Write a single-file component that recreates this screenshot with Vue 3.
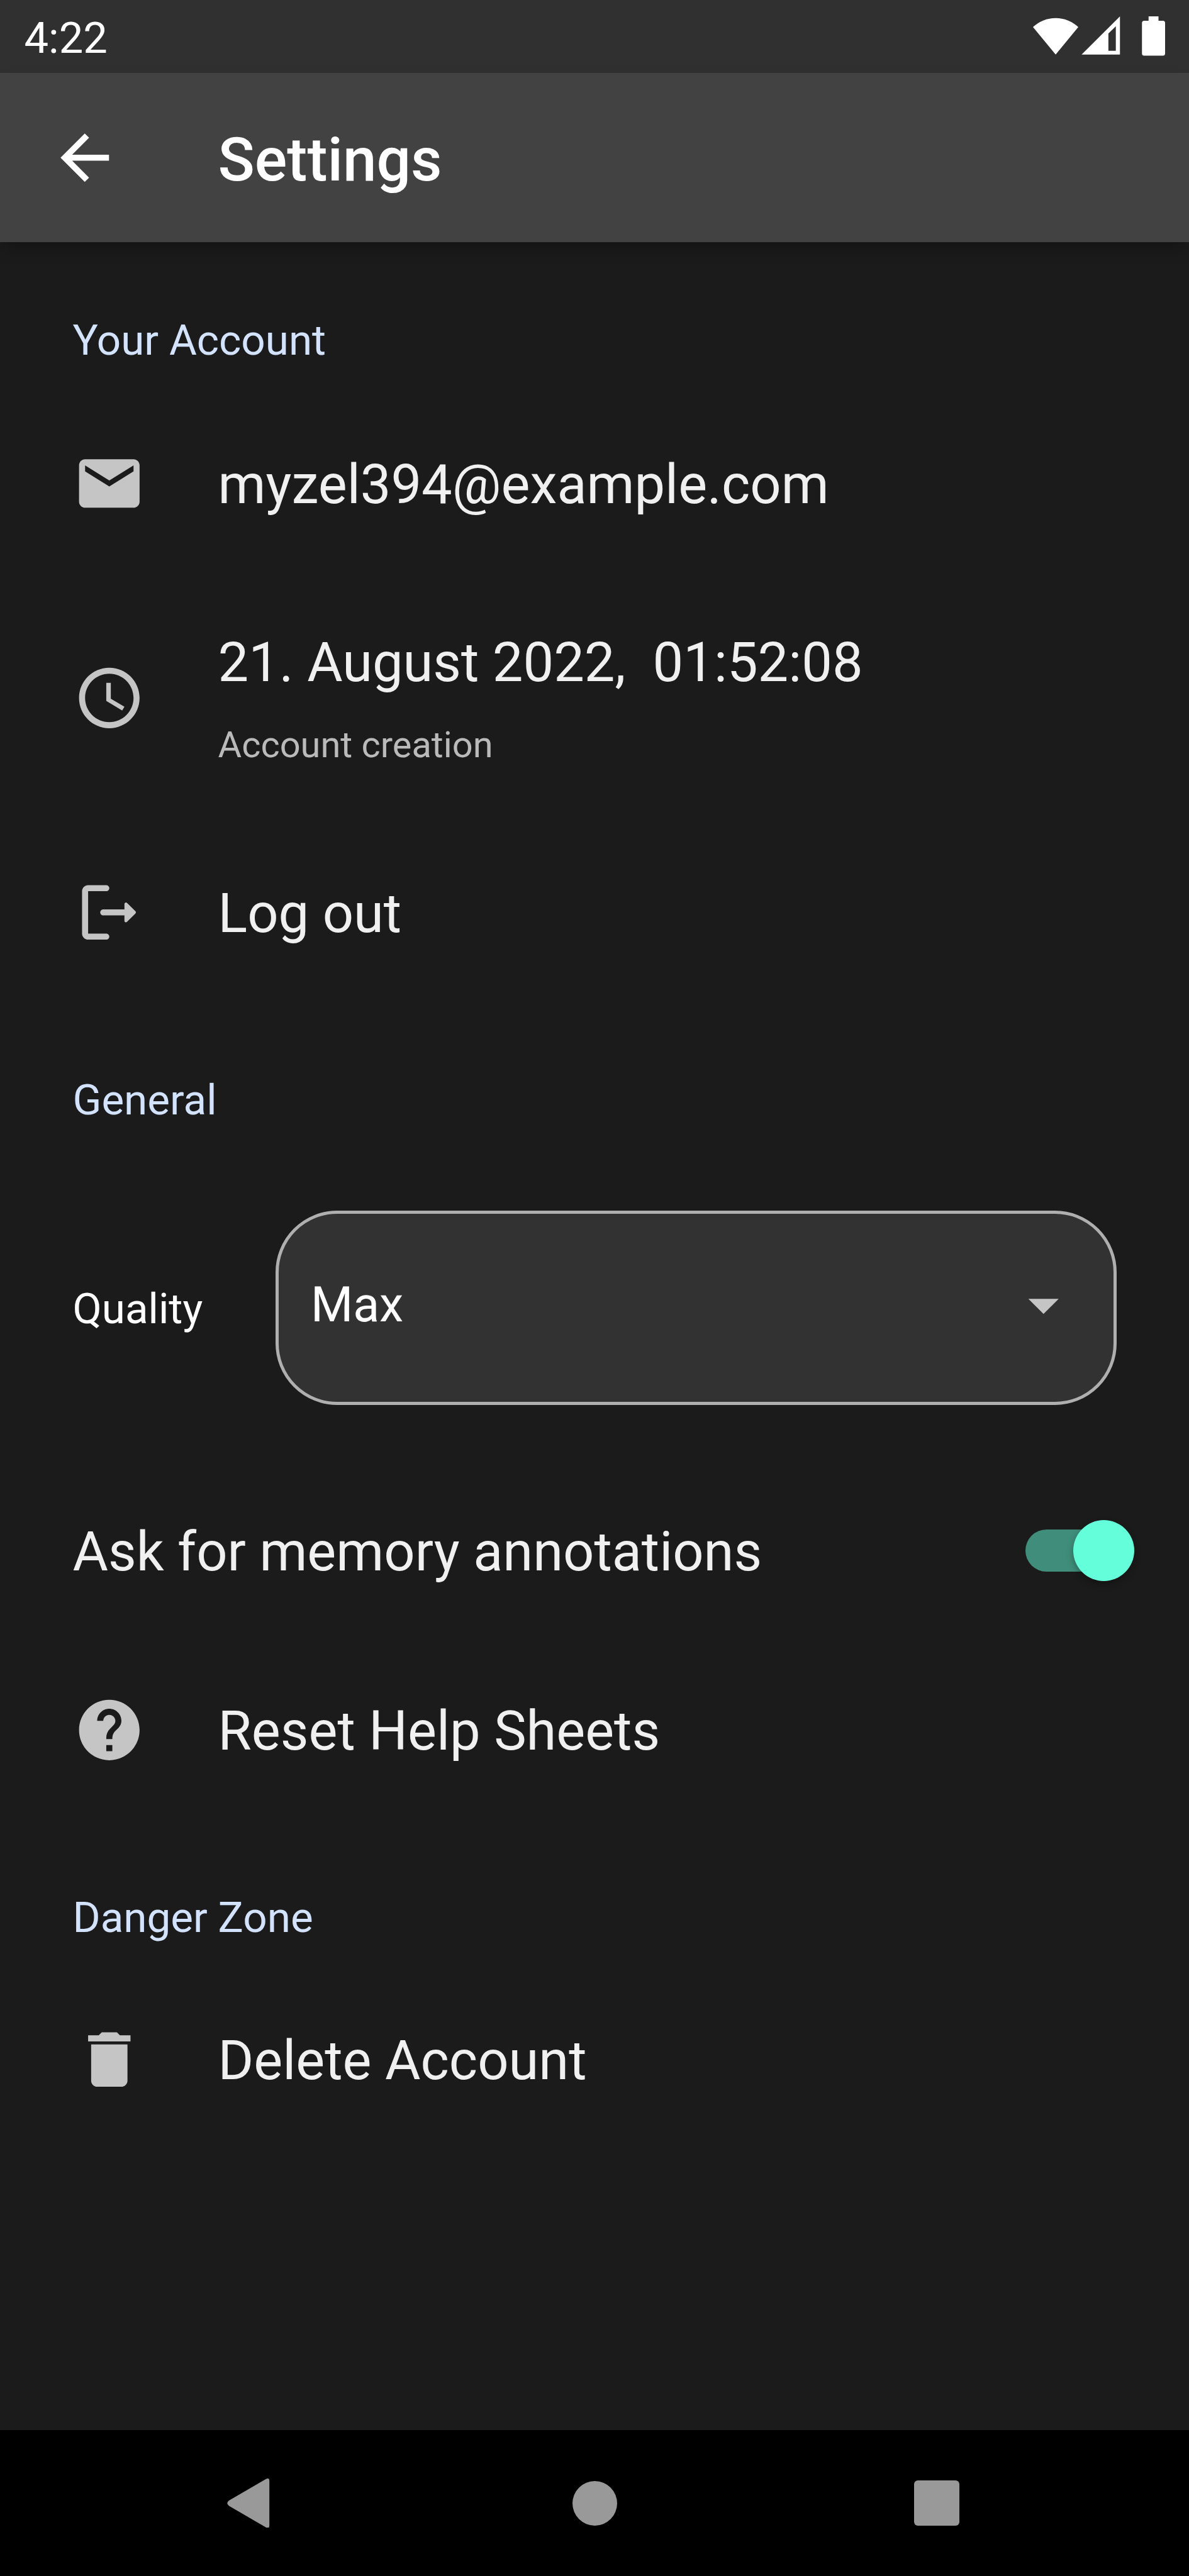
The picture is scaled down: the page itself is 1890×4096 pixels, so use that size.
<script setup>
import { ref } from 'vue'

const icons = {
  mail: 'M20 4H4c-1.1 0-1.99.9-1.99 2L2 18c0 1.1.9 2 2 2h16c1.1 0 2-.9 2-2V6c0-1.1-.9-2-2-2zm0 4l-8 5-8-5V6l8 5 8-5v2z',
  clock: 'M11.99 2C6.47 2 2 6.48 2 12s4.47 10 9.99 10C17.52 22 22 17.52 22 12S17.52 2 11.99 2zM12 20c-4.42 0-8-3.58-8-8s3.58-8 8-8 8 3.58 8 8-3.58 8-8 8zm.5-13H11v6l5.25 3.15.75-1.23-4.5-2.67V7z',
  logout: 'M5 5h6c.55 0 1-.45 1-1s-.45-1-1-1H5c-1.1 0-2 .9-2 2v14c0 1.1.9 2 2 2h6c.55 0 1-.45 1-1s-.45-1-1-1H5V5zM20.65 11.65l-2.79-2.79c-.32-.32-.86-.1-.86.35V11h-7c-.55 0-1 .45-1 1s.45 1 1 1h7v1.79c0 .45.54.67.85.35l2.79-2.79c.2-.19.2-.51.01-.7z',
  help: 'M12 2C6.48 2 2 6.48 2 12s4.48 10 10 10 10-4.48 10-10S17.52 2 12 2zm1 17h-2v-2h2v2zm2.07-7.75l-.9.92C13.45 12.9 13 13.5 13 15h-2v-.5c0-1.1.45-2.1 1.17-2.83l1.24-1.26c.37-.36.59-.86.59-1.41 0-1.1-.9-2-2-2s-2 .9-2 2H8c0-2.21 1.79-4 4-4s4 1.79 4 4c0 .88-.36 1.68-.93 2.25z',
  trash: 'M6 19c0 1.1.9 2 2 2h8c1.1 0 2-.9 2-2V7H6v12zM19 4h-3.5l-1-1h-5l-1 1H5v2h14V4z'
}

const account = [
  { icon: icons.mail, title: 'myzel394@example.com' },
  { icon: icons.clock, title: '21. August 2022,  01:52:08', subtitle: 'Account creation' },
  { icon: icons.logout, title: 'Log out' }
]

const askAnnotations = ref(true)
</script>

<template>
  <div class="screen">
    <div class="status">
      <span class="time">4:22</span>
      <svg class="tray" viewBox="1876 30 240 72" fill="#fff">
        <path d="M1876 49.5A60 60 0 0 1 1958.300 49.500L1917.200 99.500z" />
        <path fill-rule="evenodd" d="M1964.300 99.500L2034 30V99.500zM2013 61V92.500H2026.500V48z" />
        <path d="M2086 30h18v8h8q4 0 4 4v55.500q0 4-4 4h-34q-4 0-4-4V42q0-4 4-4h8z" />
      </svg>
    </div>

    <header class="appbar">
      <svg class="icon back" viewBox="0 0 24 24">
        <path d="M20 11H7.830l5.590-5.590L12 4l-8 8 8 8 1.410-1.410L7.830 13H20v-2z" />
      </svg>
      <h1>Settings</h1>
    </header>

    <main>
      <h2 class="first">Your Account</h2>
      <div v-for="item in account" :key="item.title" class="row" :class="{ tall: item.subtitle }">
        <svg class="icon" viewBox="0 0 24 24"><path :d="item.icon" /></svg>
        <div class="label">
          <div class="title">{{ item.title }}</div>
          <div v-if="item.subtitle" class="subtitle">{{ item.subtitle }}</div>
        </div>
      </div>

      <h2 class="general">General</h2>
      <div class="quality">
        <span class="name">Quality</span>
        <div class="select">
          <span class="value">Max</span>
          <svg class="icon" viewBox="0 0 24 24"><path d="M7 10l5 5 5-5z" /></svg>
        </div>
      </div>

      <div class="row ask">
        <div class="title">Ask for memory annotations</div>
        <div class="switch" :class="{ on: askAnnotations }" @click="askAnnotations = !askAnnotations">
          <div class="thumb"></div>
        </div>
      </div>

      <div class="row">
        <svg class="icon" viewBox="0 0 24 24"><path :d="icons.help" /></svg>
        <div class="label"><div class="title">Reset Help Sheets</div></div>
      </div>

      <h2>Danger Zone</h2>
      <div class="row">
        <svg class="icon" viewBox="0 0 24 24"><path :d="icons.trash" /></svg>
        <div class="label"><div class="title">Delete Account</div></div>
      </div>
    </main>

    <nav class="navbar">
      <svg class="nav-back" viewBox="0 0 67.200 78.500">
        <path d="M61 1.300Q67.200-2.500 67.200 4V74.500Q67.200 81 61 77.200L3 43.500Q-2.500 39.250 3 35z" />
      </svg>
      <div class="nav-home"></div>
      <div class="nav-recent"></div>
    </nav>
  </div>
</template>

<style>
html,
body {
  margin: 0;
  background: #1b1b1b;
}
</style>

<style scoped>
.screen {
  width: 1890px;
  height: 4096px;
  display: flex;
  flex-direction: column;
  overflow: hidden;
  background: #1b1b1b;
  color: #f0f0f0;
  font-family: Roboto, sans-serif;
  font-weight: 400;
}

.status {
  flex: none;
  box-sizing: border-box;
  height: 115.5px;
  padding: 0 38.5px;
  display: flex;
  align-items: center;
  justify-content: space-between;
  background: #303030;
}

.time {
  padding-top: 5.6px;
  font-size: 68.7px;
  line-height: 80px;
  color: #fff;
}

.tray {
  width: 210px;
  height: 63px;
}

.appbar {
  flex: none;
  box-sizing: border-box;
  height: 269.5px;
  padding-left: 77px;
  display: flex;
  align-items: center;
  background: #424242;
  box-shadow: 0 12px 24px -4px rgba(0, 0, 0, 0.3);
}

.icon {
  flex: none;
  display: block;
  width: 115.5px;
  height: 115.5px;
  fill: #c5c5c5;
}

.icon.back {
  fill: #fff;
}

h1 {
  margin: 0 0 0 154px;
  padding-top: 7.6px;
  font-size: 96.25px;
  font-weight: 500;
  line-height: 112px;
  color: #fff;
}

main {
  flex: 1;
}

h2 {
  box-sizing: border-box;
  height: 236.3px;
  margin: 0;
  padding: 114px 0 0 115.5px;
  font-size: 67.375px;
  font-weight: 400;
  line-height: 79px;
  color: #d3e3fe;
}

h2.first {
  height: 240px;
  padding-top: 116px;
}

h2.general {
  height: 331px;
  padding-top: 114.5px;
}

.row {
  box-sizing: border-box;
  height: 287px;
  padding: 0 87px 0 115.5px;
  display: flex;
  align-items: center;
}

.row.tall {
  height: 395px;
}

.label {
  margin-left: 115.5px;
}

.title {
  padding-top: 3.6px;
  font-size: 86.625px;
  line-height: 101px;
  white-space: pre;
}

.tall .title {
  padding-top: 2.4px;
}

.subtitle {
  margin-top: 46px;
  font-size: 57.75px;
  line-height: 68px;
  color: #bababa;
}

.quality {
  height: 309px;
  padding: 0 115.5px;
  display: flex;
  align-items: center;
  justify-content: space-between;
}

.name {
  padding-top: 2px;
  font-size: 67.375px;
  line-height: 79px;
  color: #fff;
}

.select {
  box-sizing: border-box;
  width: 1337px;
  height: 309px;
  padding: 0 53px 9px 51.5px;
  display: flex;
  align-items: center;
  justify-content: space-between;
  border: 5px solid #afafaf;
  border-radius: 98px;
  background: #323232;
}

.value {
  font-size: 77px;
  line-height: 90px;
  color: #fff;
}

.row.ask {
  height: 283.5px;
  margin-top: 90px;
  justify-content: space-between;
}

.switch {
  box-sizing: border-box;
  width: 173.5px;
  height: 67.4px;
  display: flex;
  align-items: center;
  background: linear-gradient(rgba(100, 255, 218, 0.5), rgba(100, 255, 218, 0.5)) no-repeat;
  background-size: 158.8px 100%;
  border-radius: 33.7px;
}

.switch.on {
  justify-content: flex-end;
}

.thumb {
  flex: none;
  width: 97px;
  height: 97px;
  border-radius: 50%;
  background: #64ffda;
  box-shadow: 0 5px 12px rgba(0, 0, 0, 0.3);
}

.navbar {
  flex: none;
  height: 232px;
  display: flex;
  align-items: center;
  background: #000;
}

.nav-back {
  width: 67.2px;
  height: 78.5px;
  margin-left: 361.4px;
  fill: #999;
}

.nav-home {
  width: 71px;
  height: 71px;
  margin-left: 481px;
  border-radius: 50%;
  background: #999;
}

.nav-recent {
  width: 72px;
  height: 72px;
  margin-left: 472px;
  border-radius: 6px;
  background: #999;
}
</style>
